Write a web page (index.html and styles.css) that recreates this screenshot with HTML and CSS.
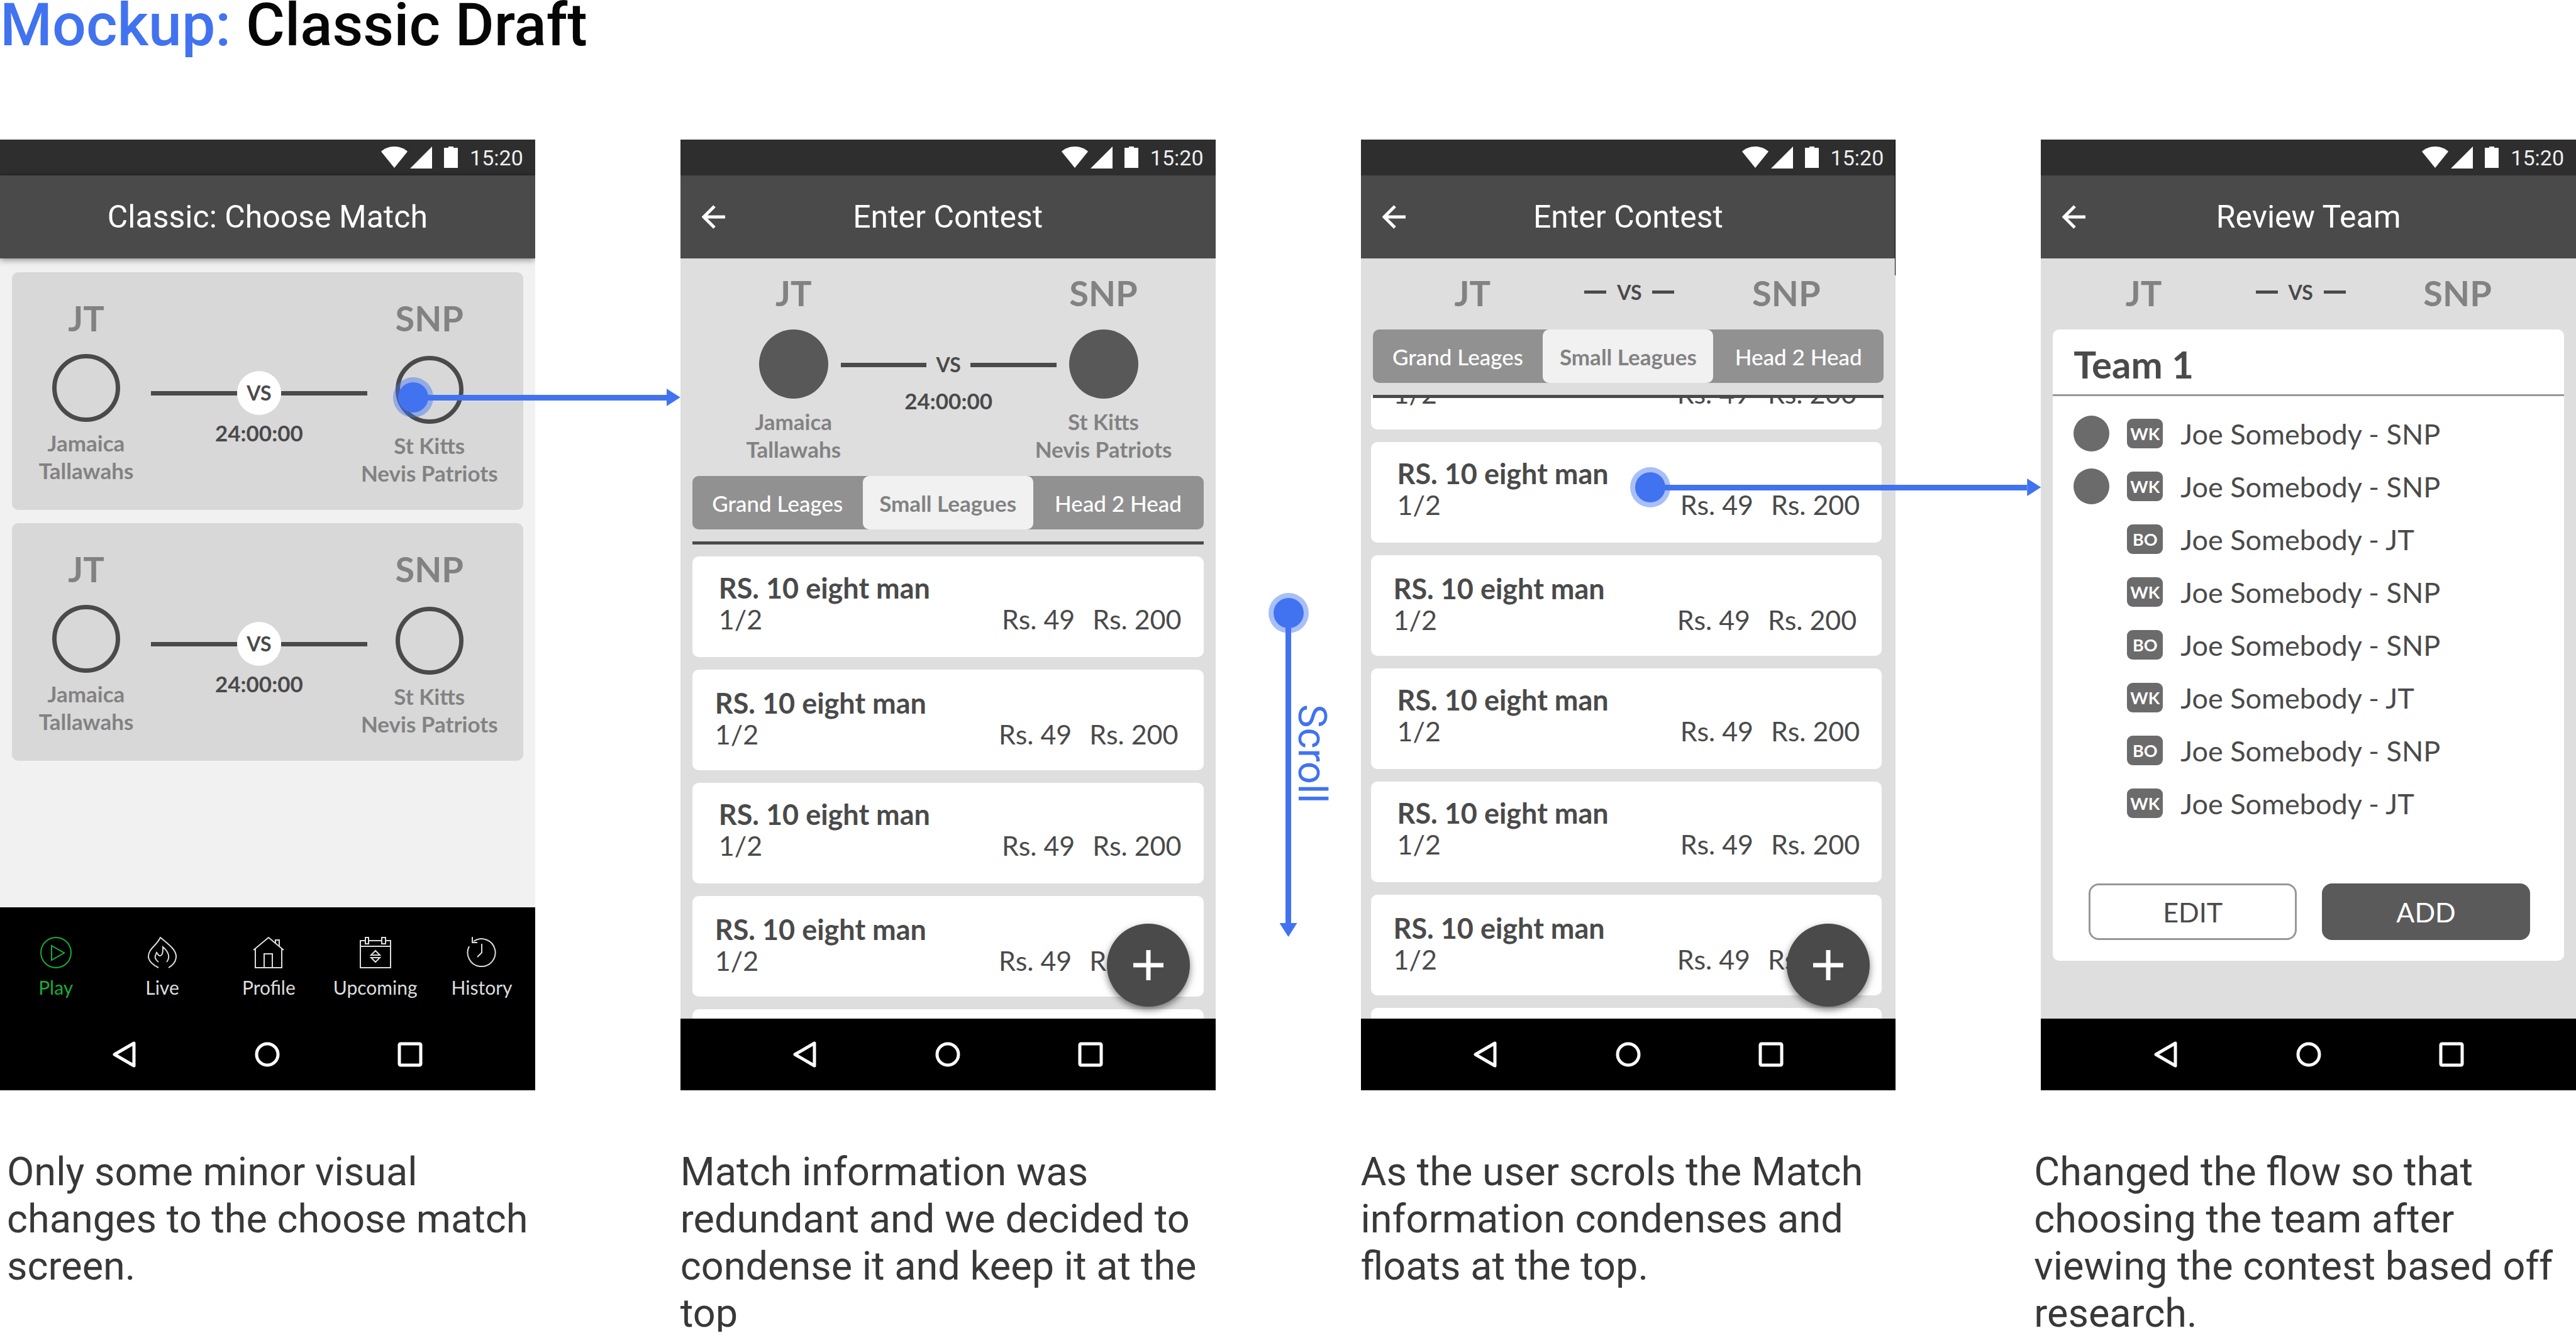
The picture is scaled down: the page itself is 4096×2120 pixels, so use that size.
FILE: index.html
```html
<!DOCTYPE html>
<html lang="en">
<head>
<meta charset="utf-8">
<meta name="viewport" content="width=device-width, initial-scale=1">
<title>Mockup: Classic Draft</title>
<link rel="stylesheet" href="styles.css">
</head>
<body>
<svg class="sprite" aria-hidden="true">
  <symbol id="i-status" viewBox="0 0 122 36">
    <path d="M0 8C5 3 13 0 21 0s16 3 21 8L21 34z"/>
    <path d="M46 35 81 0v35z"/>
    <path d="M100 2h7V0h8v2h7v32h-22z"/>
  </symbol>
  <symbol id="i-arrow" viewBox="0 0 38 38">
    <path d="M37 19H4M20 2 3 19l17 17" fill="none" stroke="currentColor" stroke-width="5"/>
  </symbol>
  <symbol id="i-back" viewBox="0 0 42 42">
    <path d="M36 3v36L5 21z" fill="none" stroke="currentColor" stroke-width="5" stroke-linejoin="round"/>
  </symbol>
  <symbol id="i-home" viewBox="0 0 42 42">
    <circle cx="21" cy="21" r="17" fill="none" stroke="currentColor" stroke-width="5"/>
  </symbol>
  <symbol id="i-recent" viewBox="0 0 42 42">
    <rect x="4" y="4" width="34" height="34" rx="2" fill="none" stroke="currentColor" stroke-width="5"/>
  </symbol>
</svg>
<main class="page">
  <h1 class="page-title"><span class="page-title-kind">Mockup:</span> Classic Draft</h1>
  <div class="flow">

    <figure class="step">
      <div class="phone">
        <div class="status"><svg class="status-icons"><use href="#i-status"/></svg><span>15:20</span></div>
        <header class="appbar appbar-raised"><h2 class="appbar-title">Classic: Choose Match</h2></header>
        <div class="screen screen-matches">
          <article class="match">
            <div class="team"><b class="code">JT</b><span class="crest"></span><span class="name">Jamaica<br>Tallawahs</span></div>
            <div class="middle"><div class="versus"><i class="bar"></i><span class="badge">VS</span><i class="bar"></i></div><time class="clock">24:00:00</time></div>
            <div class="team team-away"><b class="code">SNP</b><span class="crest"></span><span class="name">St Kitts<br>Nevis Patriots</span></div>
          </article>
          <article class="match">
            <div class="team"><b class="code">JT</b><span class="crest"></span><span class="name">Jamaica<br>Tallawahs</span></div>
            <div class="middle"><div class="versus"><i class="bar"></i><span class="badge">VS</span><i class="bar"></i></div><time class="clock">24:00:00</time></div>
            <div class="team team-away"><b class="code">SNP</b><span class="crest"></span><span class="name">St Kitts<br>Nevis Patriots</span></div>
          </article>
        </div>
        <nav class="tabs">
          <a class="tab tab-on" href="#play"><svg class="tab-icon" viewBox="0 0 50 50"><circle cx="25" cy="25" r="24"/><path d="M18 14v23l20-11.500z"/></svg>Play</a>
          <a class="tab" href="#live"><svg class="tab-icon" viewBox="0 0 50 50"><path d="M19 49C9 44 3 38 3 31 3 19 15 15 22 1c12 10 25 19 25 30 0 8-5 14-12 18"/><path d="M19 40c-4-3-6-7-5-10 1-2 1-3 2-5 2 2 2 5 5 5 5 0 5-7 5-14 7 6 13 15 6 24"/></svg>Live</a>
          <a class="tab" href="#profile"><svg class="tab-icon" viewBox="0 0 50 50"><path d="M1 21 25 1l24 20M4 19v30h42V19M18 49V27h13v22M36 10V5h6v10"/></svg>Profile</a>
          <a class="tab" href="#upcoming"><svg class="tab-icon" viewBox="0 0 50 50"><path d="M9 6H1v43h48V6h-8M14 6h21M1 15h48M9 1h5v10H9zM35 1h6v10h-6zM25 22l-7 7h14zM18 33h14l-7 7z"/></svg>Upcoming</a>
          <a class="tab" href="#history"><svg class="tab-icon" viewBox="0 0 50 50"><path d="M5 15A22 22 0 1 0 12 7M10 0v9h8M25 11v14l-7 7"/></svg>History</a>
        </nav>
        <nav class="navbar">
          <button class="nav-key" aria-label="Back"><svg><use href="#i-back"/></svg></button>
          <button class="nav-key" aria-label="Home"><svg><use href="#i-home"/></svg></button>
          <button class="nav-key" aria-label="Recent apps"><svg><use href="#i-recent"/></svg></button>
        </nav>
      </div>
      <div class="pointer pointer-match"><i class="dot"></i><i class="shaft"></i><i class="tip"></i></div>
      <figcaption class="caption caption-first">Only some minor visual changes to the choose match screen.</figcaption>
    </figure>

    <figure class="step">
      <div class="phone">
        <div class="status"><svg class="status-icons"><use href="#i-status"/></svg><span>15:20</span></div>
        <header class="appbar"><button class="appbar-back" aria-label="Back"><svg><use href="#i-arrow"/></svg></button><h2 class="appbar-title">Enter Contest</h2></header>
        <div class="screen">
          <div class="summary">
            <div class="team"><b class="code">JT</b><span class="crest"></span><span class="name">Jamaica<br>Tallawahs</span></div>
            <div class="middle"><div class="versus"><i class="bar"></i><span class="vs">VS</span><i class="bar"></i></div><time class="clock">24:00:00</time></div>
            <div class="team"><b class="code">SNP</b><span class="crest"></span><span class="name">St Kitts<br>Nevis Patriots</span></div>
          </div>
          <div class="segments">
            <button class="segment">Grand Leages</button><button class="segment segment-on">Small Leagues</button><button class="segment">Head 2 Head</button>
          </div>
          <div class="viewport">
            <ul class="contests">
              <li class="contest"><b class="contest-name">RS. 10 eight man</b><span>1/2</span><span class="fee">Rs. 49</span><span class="prize">Rs. 200</span></li>
              <li class="contest contest-alt"><b class="contest-name">RS. 10 eight man</b><span>1/2</span><span class="fee">Rs. 49</span><span class="prize">Rs. 200</span></li>
              <li class="contest"><b class="contest-name">RS. 10 eight man</b><span>1/2</span><span class="fee">Rs. 49</span><span class="prize">Rs. 200</span></li>
              <li class="contest contest-alt"><b class="contest-name">RS. 10 eight man</b><span>1/2</span><span class="fee">Rs. 49</span><span class="prize">Rs. 200</span></li>
              <li class="contest contest-empty"></li>
            </ul>
          </div>
          <button class="fab" aria-label="Add contest"><svg viewBox="0 0 48 48"><path d="M24 0v48M0 24h48"/></svg></button>
        </div>
        <nav class="navbar">
          <button class="nav-key" aria-label="Back"><svg><use href="#i-back"/></svg></button>
          <button class="nav-key" aria-label="Home"><svg><use href="#i-home"/></svg></button>
          <button class="nav-key" aria-label="Recent apps"><svg><use href="#i-recent"/></svg></button>
        </nav>
      </div>
      <div class="pointer pointer-scroll"><i class="dot"></i><i class="shaft"></i><i class="tip"></i><span class="pointer-label">Scroll</span></div>
      <figcaption class="caption">Match information was redundant and we decided to condense it and keep it at the top</figcaption>
    </figure>

    <figure class="step">
      <div class="phone phone-edge">
        <div class="status"><svg class="status-icons"><use href="#i-status"/></svg><span>15:20</span></div>
        <header class="appbar"><button class="appbar-back" aria-label="Back"><svg><use href="#i-arrow"/></svg></button><h2 class="appbar-title">Enter Contest</h2></header>
        <div class="screen">
          <div class="condensed"><b class="code">JT</b><span class="dashes"><i class="dash"></i>VS<i class="dash"></i></span><b class="code">SNP</b></div>
          <div class="segments">
            <button class="segment">Grand Leages</button><button class="segment segment-on">Small Leagues</button><button class="segment">Head 2 Head</button>
          </div>
          <div class="viewport">
            <ul class="contests contests-scrolled">
              <li class="contest contest-alt contest-cut"><span>1/2</span><span class="fee">Rs. 49</span><span class="prize">Rs. 200</span></li>
              <li class="contest"><b class="contest-name">RS. 10 eight man</b><span>1/2</span><span class="fee">Rs. 49</span><span class="prize">Rs. 200</span></li>
              <li class="contest contest-alt"><b class="contest-name">RS. 10 eight man</b><span>1/2</span><span class="fee">Rs. 49</span><span class="prize">Rs. 200</span></li>
              <li class="contest"><b class="contest-name">RS. 10 eight man</b><span>1/2</span><span class="fee">Rs. 49</span><span class="prize">Rs. 200</span></li>
              <li class="contest"><b class="contest-name">RS. 10 eight man</b><span>1/2</span><span class="fee">Rs. 49</span><span class="prize">Rs. 200</span></li>
              <li class="contest contest-alt"><b class="contest-name">RS. 10 eight man</b><span>1/2</span><span class="fee">Rs. 49</span><span class="prize">Rs. 200</span></li>
              <li class="contest contest-empty"></li>
            </ul>
          </div>
          <button class="fab" aria-label="Add contest"><svg viewBox="0 0 48 48"><path d="M24 0v48M0 24h48"/></svg></button>
        </div>
        <nav class="navbar">
          <button class="nav-key" aria-label="Back"><svg><use href="#i-back"/></svg></button>
          <button class="nav-key" aria-label="Home"><svg><use href="#i-home"/></svg></button>
          <button class="nav-key" aria-label="Recent apps"><svg><use href="#i-recent"/></svg></button>
        </nav>
      </div>
      <div class="pointer pointer-contest"><i class="dot"></i><i class="shaft"></i><i class="tip"></i></div>
      <figcaption class="caption">As the user scrols the Match information condenses and floats at the top.</figcaption>
    </figure>

    <figure class="step">
      <div class="phone">
        <div class="status"><svg class="status-icons"><use href="#i-status"/></svg><span>15:20</span></div>
        <header class="appbar"><button class="appbar-back" aria-label="Back"><svg><use href="#i-arrow"/></svg></button><h2 class="appbar-title">Review Team</h2></header>
        <div class="screen">
          <div class="condensed condensed-review"><b class="code">JT</b><span class="dashes"><i class="dash"></i>VS<i class="dash"></i></span><b class="code">SNP</b></div>
          <section class="review">
            <h3 class="review-title">Team 1</h3>
            <ul class="players">
              <li class="player"><i class="face"></i><span class="role">WK</span>Joe Somebody - SNP</li>
              <li class="player"><i class="face"></i><span class="role">WK</span>Joe Somebody - SNP</li>
              <li class="player"><span class="role">BO</span>Joe Somebody - JT</li>
              <li class="player"><span class="role">WK</span>Joe Somebody - SNP</li>
              <li class="player"><span class="role">BO</span>Joe Somebody - SNP</li>
              <li class="player"><span class="role">WK</span>Joe Somebody - JT</li>
              <li class="player"><span class="role">BO</span>Joe Somebody - SNP</li>
              <li class="player"><span class="role">WK</span>Joe Somebody - JT</li>
            </ul>
            <div class="actions"><button class="action">EDIT</button><button class="action action-main">ADD</button></div>
          </section>
        </div>
        <nav class="navbar">
          <button class="nav-key" aria-label="Back"><svg><use href="#i-back"/></svg></button>
          <button class="nav-key" aria-label="Home"><svg><use href="#i-home"/></svg></button>
          <button class="nav-key" aria-label="Recent apps"><svg><use href="#i-recent"/></svg></button>
        </nav>
      </div>
      <figcaption class="caption caption-last">Changed the flow so that choosing the team after viewing the contest based off research.</figcaption>
    </figure>

  </div>
</main>
</body>
</html>
```

FILE: styles.css
```css
:root {
  --blue: #4173f0;
  --ink: #4a4a4a;
  --muted: #828282;
  --gap: 231px;
  --ui: Lato, "Open Sans", sans-serif;
  --text: Roboto, "Liberation Sans", sans-serif;
}

* { box-sizing: border-box; }
body { margin: 0; background: #fff; font-family: var(--text); }
button { padding: 0; border: 0; background: none; color: inherit; font: inherit; }
ul { margin: 0; padding: 0; list-style: none; }
.sprite { display: none; }

.page { overflow: clip; }
.page-title { margin: 0 0 142px; font-size: 95px; line-height: 80px; font-weight: 500; color: #060606; }
.page-title-kind { color: var(--blue); }

.flow { display: grid; grid-template-columns: repeat(4, minmax(0, 1fr)); gap: var(--gap); }
.step { position: relative; margin: 0; }
.caption { margin: 92px -8px -8px 0; font-size: 63px; line-height: 75px; color: #383838; }
.caption-first { padding-left: 11px; }
.caption-last { margin-left: -11px; }

/* phone frame */
.phone { display: flex; flex-direction: column; aspect-ratio: 9 / 16; overflow: hidden; background: #dedede; color: var(--ink); font-family: var(--ui); }
.phone-edge { position: relative; }
.phone-edge::after { content: ""; position: absolute; top: 0; right: 0; width: 1px; height: 216px; background: #000; }
.status { flex: none; display: flex; align-items: center; justify-content: flex-end; gap: 19px; height: 57px; padding-right: 19px; background: #2e2e2e; color: #eee; font: 34px/40px var(--text); }
.status-icons { width: 122px; height: 36px; fill: #fff; }
.appbar { position: relative; flex: none; display: flex; align-items: center; justify-content: center; height: 132px; background: var(--ink); color: #fff; }
.appbar-raised { z-index: 1; box-shadow: 0 2px 10px rgba(0, 0, 0, .45); }
.appbar-title { margin: 0; font: 400 50px/60px var(--text); }
.appbar-back { position: absolute; left: 34px; display: flex; }
.appbar-back svg { width: 38px; height: 38px; }
.screen { position: relative; flex: 1; min-height: 0; display: flex; flex-direction: column; }
.navbar { flex: none; display: flex; justify-content: center; height: 114px; background: #000; color: #fff; }
.nav-key { display: flex; align-items: center; justify-content: center; width: 227px; }
.nav-key svg { width: 42px; height: 42px; }

/* bottom tabs */
.tabs { flex: none; display: grid; grid-template-columns: repeat(5, 1fr); height: 177px; padding-left: 4px; background: #000; }
.tab { display: flex; flex-direction: column; align-items: center; gap: 12px; padding-top: 47px; color: #ddd; font-size: 30px; line-height: 36px; text-decoration: none; }
.tab-on { color: #17ad37; }
.tab-icon { width: 50px; height: 50px; fill: none; stroke: currentColor; stroke-width: 2; }

/* match header and match cards */
.screen-matches { gap: 21px; padding: 22px 19px 0; background: #f1f1f1; }
.match { display: grid; grid-template-columns: 206px 1fr 206px; padding: 45px 46px 37px 15px; border-radius: 10px; background: #d8d8d8; }
.summary { display: grid; grid-template-columns: 150px 1fr 150px; padding: 27px 103px 21px 105px; }
.team { display: flex; flex-direction: column; align-items: center; text-align: center; white-space: nowrap; color: var(--muted); }
.code { font-size: 56px; line-height: 56px; font-weight: 700; color: var(--muted); }
.crest { flex: none; border-radius: 50%; }
.name, .clock { font-size: 35px; line-height: 44px; font-weight: 700; }
.match .crest { width: 108px; height: 108px; margin: 29px 0 11px; border: 7px solid var(--ink); }
.match .team-away .crest { margin: 32px 0 12px; }
.summary .crest { width: 110px; height: 110px; margin: 30px 0 14px; background: #585858; }
.middle { display: flex; flex-direction: column; align-items: center; }
.match .middle { margin-right: -4px; padding-top: 112px; gap: 6px; }
.summary .middle { padding-top: 120px; gap: 13px; }
.versus { align-self: stretch; display: flex; align-items: center; font-size: 32px; line-height: 44px; font-weight: 700; }
.bar { flex: 1; height: 7px; background: var(--ink); }
.badge { width: 70px; height: 70px; border-radius: 50%; background: #fff; line-height: 70px; text-align: center; }
.vs { width: 70px; text-align: center; }

/* condensed match header */
.condensed { display: flex; justify-content: center; gap: 118px; padding: 27px 0 30px 4px; }
.condensed-review { padding-right: 29px; }
.condensed .code { width: 120px; text-align: center; }
.dashes { display: flex; align-items: center; justify-content: space-between; width: 143px; height: 52px; font-size: 32px; font-weight: 700; }
.dash { width: 35px; height: 5px; background: var(--ink); }

/* league switch */
.segments { flex: none; display: grid; grid-template-columns: repeat(3, 1fr); height: 85px; margin: 0 19px 19px; border-radius: 10px; background: #919191; color: #fff; }
.segment { border-radius: 10px; font-size: 35px; font-weight: 500; }
.segment-on { background: #f1f1f1; color: var(--muted); font-weight: 700; }

/* contest list */
.viewport { flex: 1; min-height: 0; overflow: hidden; position: relative; }
.viewport::before { content: ""; position: absolute; z-index: 1; top: 0; left: 19px; right: 19px; height: 5px; background: var(--ink); }
.contests { display: grid; gap: 20px; padding: 24px 19px 0; }
.contests-scrolled { margin-top: -129px; padding: 24px 22px 0 16px; }
.contest { display: grid; grid-template-columns: 1fr auto auto; column-gap: 28px; padding: 25px 35px 35px 42px; border-radius: 10px; background: #fff; font-size: 43px; line-height: 50px; }
.contest-alt { padding: 28px 40px 32px 36px; }
.contest-cut { padding-top: 78px; }
.contest-name { grid-column: 1 / -1; font-size: 45px; font-weight: 700; }
.contest-empty { height: 160px; }
.fab { position: absolute; right: 41px; bottom: 19px; z-index: 2; display: flex; align-items: center; justify-content: center; width: 132px; height: 132px; border-radius: 50%; background: var(--ink); box-shadow: 0 5px 12px rgba(0, 0, 0, .5); }
.fab svg { width: 48px; height: 48px; stroke: #fff; stroke-width: 7; }

/* team review */
.review { margin: 0 19px; border-radius: 10px; background: #fff; padding-bottom: 33px; }
.review-title { margin: 0; padding: 25px 34px 18px 33px; border-bottom: 3px solid #979797; font-size: 60px; line-height: 60px; font-weight: 700; }
.players { display: grid; gap: 27px; padding: 31px 34px 99px 118px; }
.player { position: relative; display: flex; align-items: center; gap: 28px; height: 57px; font-size: 45px; line-height: 50px; }
.face { width: 57px; height: 57px; margin-left: -85px; border-radius: 50%; background: #6b6b6b; }
.role { width: 57px; height: 47px; border-radius: 9px; background: #6b6b6b; color: #fff; font-size: 27px; line-height: 47px; font-weight: 700; text-align: center; }
.actions { display: grid; grid-template-columns: 1fr 1fr; gap: 40px; padding: 0 54px 0 57px; }
.action { height: 90px; border: 3px solid #979797; border-radius: 16px; font-size: 43px; }
.action-main { border-color: #5a5a5a; background: #5a5a5a; color: #fff; }

/* arrows that lead from one screen to the next */
.pointer { position: absolute; z-index: 3; display: flex; align-items: center; color: var(--blue); }
.pointer-match { top: 386px; left: 633px; right: calc(0px - var(--gap)); }
.pointer-contest { top: 529px; left: 436px; right: calc(0px - var(--gap)); }
.pointer-scroll { top: 729px; left: calc(100% + 92px); flex-direction: column; height: 539px; }
.dot { flex: none; width: 48px; height: 48px; border-radius: 50%; background: currentColor; box-shadow: 0 0 0 8px rgba(65, 115, 240, .46); }
.shaft { flex: 1; height: 9px; margin-left: -4px; background: currentColor; }
.tip { width: 22px; height: 28px; background: currentColor; clip-path: polygon(0 0, 100% 50%, 0 100%); }
.pointer-scroll .shaft { width: 9px; margin: -4px 0 0; }
.pointer-scroll .tip { width: 28px; height: 22px; clip-path: polygon(0 0, 100% 0, 50% 100%); }
.pointer-label { position: absolute; top: 169px; left: 24px; writing-mode: vertical-rl; font-size: 63px; line-height: 75px; }
```
